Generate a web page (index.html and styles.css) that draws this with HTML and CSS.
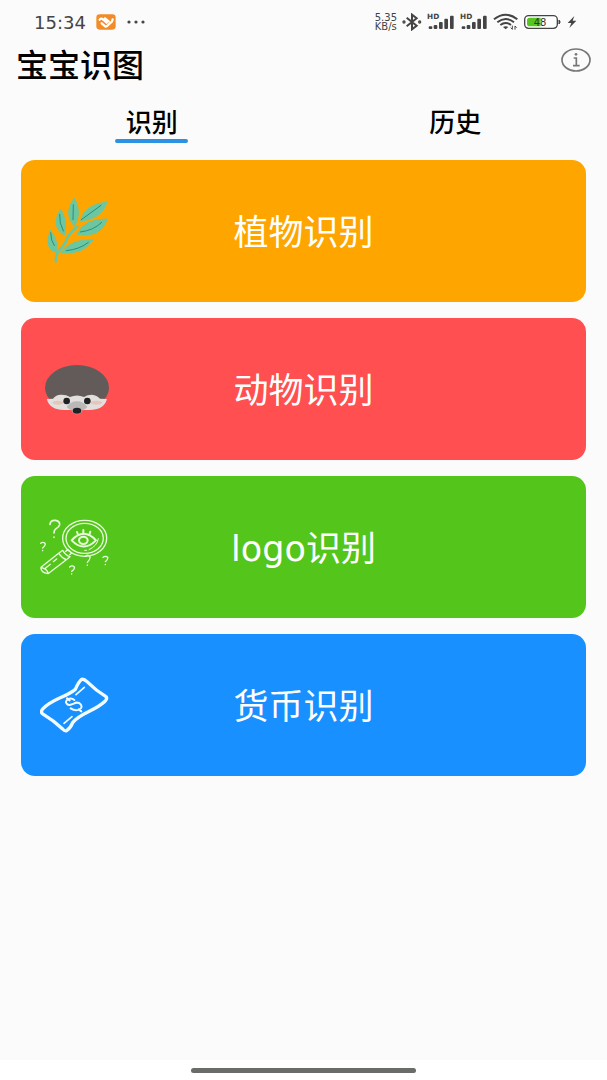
FILE: index.html
```html
<!DOCTYPE html>
<html lang="zh-CN">
<head>
    <meta charset="UTF-8">
    <meta name="viewport" content="width=device-width, initial-scale=1.0">
    <title>宝宝识图</title>
    <link rel="stylesheet" href="styles.css">
</head>
<body>
    <div class="status-bar">
        <div class="status-left">
            <span class="time">15:34</span>
            <svg width="20" height="16" viewBox="0 0 60 48">
                <rect x="1" y="1" width="58" height="46" rx="10" fill="#f28c28"/>
                <path d="M11 17 Q15 11 21 16 L32 26 M27 13 L38 22 M50 16 Q50 22 43 27 L32 37 Q29 39 25 35 L17 28" fill="none" stroke="#fff" stroke-width="7" stroke-linecap="round"/>
            </svg>
            <svg width="20" height="4" viewBox="0 0 20 4" fill="#444">
                <circle cx="3" cy="2" r="1.6"/><circle cx="10" cy="2" r="1.6"/><circle cx="17" cy="2" r="1.6"/>
            </svg>
        </div>
        <div class="status-right">
            <span class="speed">5.35<br>KB/s</span>
            <svg width="20" height="18" viewBox="0 0 60 54" fill="none" stroke="#444" stroke-width="6">
                <path d="M14 14 L44 38 L30 49 V5 L44 16 L14 40"/>
                <circle cx="6" cy="27" r="2"/><circle cx="53" cy="27" r="2"/>
            </svg>
            <svg width="28" height="18" viewBox="0 0 84 54" fill="#444">
                <text class="hd" x="0" y="19">HD</text>
                <rect x="5" y="40" width="11" height="8" rx="3"/><rect x="20" y="36" width="11" height="12" rx="3"/><rect x="36" y="27" width="11" height="21" rx="3"/><rect x="52" y="17" width="11" height="31" rx="3"/><rect x="69" y="8" width="11" height="40" rx="3"/>
            </svg>
            <svg width="28" height="18" viewBox="0 0 84 54" fill="#444">
                <text class="hd" x="0" y="19">HD</text>
                <rect x="5" y="40" width="11" height="8" rx="3"/><rect x="20" y="36" width="11" height="12" rx="3"/><rect x="36" y="27" width="11" height="21" rx="3"/><rect x="52" y="17" width="11" height="31" rx="3"/><rect x="69" y="8" width="11" height="40" rx="3"/>
            </svg>
            <svg width="26" height="18" viewBox="0 0 78 54" fill="none" stroke="#444" stroke-width="6">
                <path d="M3 19 Q38 -9 73 19 M13 28 Q38 8 63 28 M22 36 Q38 24 54 36"/>
                <path d="M30 42 Q38 37 46 42 L38 49 Z" fill="#444" stroke="none"/>
                <path d="M58 38 V49 L53 44 M66 50 V39 L71 44" stroke-width="3"/>
            </svg>
            <svg width="38" height="16" viewBox="0 0 114 48">
                <rect x="2" y="5" width="98" height="38" rx="12" fill="#fff" stroke="#444" stroke-width="4"/>
                <path d="M17 11 H50 V37 H17 Q9 37 9 29 V19 Q9 11 17 11" fill="#55c71f"/>
                <path d="M105 18 Q112 24 105 30 Z" fill="#444" stroke="#444" stroke-width="3"/>
                <text class="level" x="29" y="35">48</text>
            </svg>
            <svg width="10" height="14" viewBox="0 0 30 42" fill="#444">
                <path d="M22 3 L2 24 H13 L7 39 L28 17 H17 Z"/>
            </svg>
        </div>
    </div>

    <header class="header">
        <h1>宝宝识图</h1>
        <button class="info" type="button" aria-label="关于">
            <svg width="30" height="24" viewBox="0 0 90 72" fill="none" stroke="#777">
                <ellipse cx="45" cy="36" rx="42" ry="33" stroke-width="5"/>
                <path d="M38 30 H46 V52 M36 53 H56" stroke-width="5"/>
                <circle cx="45" cy="19" r="4" fill="#777" stroke="none"/>
            </svg>
        </button>
    </header>

    <nav class="tabs">
        <button class="tab active" type="button">识别</button>
        <button class="tab" type="button">历史</button>
    </nav>

    <main class="cards">
        <button class="card plant" type="button">
            <svg class="icon" viewBox="60 45 216 216">
                <path d="M108 247 Q106 222 119 210 Q137 190 140 178 Q148 159 174 138" fill="none" stroke="#6cc7a0" stroke-width="8"/>
                <g fill="#6cc7a0" stroke="#6cc7a0" stroke-width="3">
                    <path d="M91 151 Q116 180 110 218 Q70 208 91 151Z"/>
                    <path d="M122 87 Q144 124 133 166 Q89 139 122 87Z"/>
                    <path d="M163 55 Q188 98 163 139 Q128 98 163 55Z"/>
                    <path d="M262 66 Q244 118 180 124 Q195 71 262 66Z"/>
                    <path d="M261 117 Q245 174 171 163 Q193 116 261 117Z"/>
                    <path d="M219 180 Q188 226 123 218 Q155 175 219 180Z"/>
                </g>
                <path d="M92 158 Q92 182 103 197 M119 103 Q117 129 130 153 M160 74 L159 119 M243 76 L184 119 M245 127 Q222 151 181 156 M205 187 Q180 208 139 212" fill="none" stroke="#278f80" stroke-width="3" stroke-linecap="round"/>
            </svg>
            <span class="label">植物识别</span>
        </button>
        <button class="card animal" type="button">
            <svg class="icon" viewBox="60 39 216 216">
                <ellipse cx="171" cy="143" rx="96" ry="68" fill="#625b5a"/>
                <path d="M80 177 L99 176 Q108 164 122 164 Q138 163 150 171 Q171 162 192 171 Q202 164 216 164 Q231 165 240 176 L261 177 Q252 210 208 210 H132 Q90 210 80 177Z" fill="#e2dfdd"/>
                <ellipse cx="114" cy="188" rx="17" ry="6" fill="#e7c5b9"/>
                <ellipse cx="229" cy="188" rx="17" ry="6" fill="#e7c5b9"/>
                <path d="M171 184 Q191 184 202 201 Q194 210 187 211 Q185 222 171 223 Q157 222 155 211 Q147 209 140 201 Q151 184 171 184Z" fill="#bbb9b8"/>
                <circle cx="140" cy="183" r="10" fill="#202124"/>
                <circle cx="202" cy="183" r="10" fill="#202124"/>
                <ellipse cx="171" cy="212" rx="13" ry="9" fill="#202124"/>
            </svg>
            <span class="label">动物识别</span>
        </button>
        <button class="card logo" type="button">
            <svg class="icon" viewBox="60 33 216 216" fill="none" stroke="#e8fbdc" stroke-width="4" stroke-linecap="round" stroke-linejoin="round">
                <ellipse cx="194" cy="115" rx="66" ry="54"/>
                <ellipse cx="194" cy="115" rx="56" ry="45"/>
                <path d="M155 121 Q191 82 228 121 Q191 158 155 121Z" stroke-width="6"/>
                <ellipse cx="190" cy="121" rx="13" ry="11" stroke-width="6"/>
                <path d="M171 96 L174 104 M190 90 V101 M211 95 L208 104" stroke-width="6"/>
                <path d="M235 116 Q232 138 207 149 M194 151 H200" stroke-width="3"/>
                <path d="M116 160 L63 202 Q61 217 84 221 L139 179 Q127 175 116 160Z M117 159 L128 151 Q137 166 150 170 L139 179 M137 154 L144 149 L155 159 L149 164 M64 203 Q81 206 84 219 M100 185 L110 177 M77 204 L91 193"/>
                <path d="M90 73 Q91 60 106 61 Q120 63 119 74 Q117 82 108 86 Q102 90 102 99 M102 111 V112" stroke-width="5"/>
                <path d="M62 130 Q68 124 75 130 Q78 136 68 144 M68 151 V152 M149 201 Q156 194 163 201 Q165 207 155 214 M155 221 V222 M197 169 Q204 162 210 170 Q212 176 202 187 M202 195 V196 M249 172 Q256 166 263 172 Q265 178 256 185 M256 193 V194"/>
            </svg>
            <span class="label">logo识别</span>
        </button>
        <button class="card money" type="button">
            <svg class="icon" viewBox="60 27 216 216" fill="none" stroke="#f2fbff" stroke-width="10" stroke-linecap="round" stroke-linejoin="round">
                <path d="M185 58 Q192 56 201 65 Q228 92 258 110 Q263 116 255 124 Q239 139 208 154 Q171 172 158 188 Q152 204 140 212 Q134 214 128 207 Q100 181 67 161 Q61 155 69 146 Q84 130 119 114 Q150 101 166 88 Q175 67 185 58Z"/>
                <path d="M193 82 L168 104 M156 170 L132 190" stroke-width="5"/>
                <path d="M163 120 Q155 113 145 117 Q133 124 141 132 Q147 138 161 131 Q174 124 182 133 Q189 144 177 149 Q165 154 152 145 M141 115 L149 121 M176 148 L184 154" stroke-width="6"/>
            </svg>
            <span class="label">货币识别</span>
        </button>
    </main>

    <footer class="gesture-bar"><span class="handle"></span></footer>
</body>
</html>
```
FILE: styles.css
```css
* {
    box-sizing: border-box;
}

body {
    display: flex;
    flex-direction: column;
    min-height: 100vh;
    margin: 0;
    background: #fbfbfb;
    color: #000;
    font-family: "DejaVu Sans", "Noto Sans CJK SC", sans-serif;
}

button {
    padding: 0;
    border: none;
    background: none;
    color: inherit;
    font-family: inherit;
    cursor: pointer;
}

svg {
    display: block;
    flex: none;
}

.status-bar {
    display: flex;
    justify-content: space-between;
    align-items: center;
    height: 44px;
    padding: 0 30px 0 34px;
    color: #444;
}

.status-left {
    display: flex;
    align-items: center;
    gap: 10px;
}

.status-right {
    display: flex;
    align-items: center;
    gap: 5px;
}

.time {
    font-size: 18px;
}

.speed {
    font-size: 10px;
    line-height: 9px;
}

.hd {
    font-size: 22px;
    font-weight: bold;
}

.level {
    font-size: 30px;
    fill: #333;
}

.header {
    display: flex;
    justify-content: space-between;
    align-items: center;
    height: 44px;
    padding: 0 16px;
}

.header h1 {
    margin: 0;
    font-size: 32px;
    font-weight: 500;
    line-height: 44px;
}

.info {
    align-self: flex-start;
    padding-top: 4px;
}

.tabs {
    display: flex;
    height: 56px;
    padding-top: 15px;
}

.tab {
    display: flex;
    flex: 1;
    flex-direction: column;
    align-items: center;
    font-size: 26px;
    font-weight: 500;
    line-height: 36px;
}

.tab::before {
    content: "";
    height: 2px;
}

.tab.active::after {
    content: "";
    width: 73px;
    height: 4px;
    margin-top: -2px;
    border-radius: 2px;
    background: #2b91e2;
}

.cards {
    display: flex;
    flex: 1;
    flex-direction: column;
    gap: 16px;
    padding: 16px 21px;
}

.card {
    display: grid;
    grid-template-columns: 72px 1fr 72px;
    align-items: center;
    height: 142px;
    padding: 0 19px;
    border-radius: 14px;
    color: #fff;
}

.plant {
    background: #ffa500;
}

.animal {
    background: #ff4f50;
}

.logo {
    background: #54c61b;
}

.money {
    background: #1990ff;
}

.icon {
    width: 72px;
    height: 72px;
}

.label {
    padding-top: 4px;
    font-size: 35px;
    font-weight: 400;
    line-height: 48px;
    text-align: center;
}

.gesture-bar {
    display: flex;
    justify-content: center;
    align-items: center;
    height: 20px;
    background: #fff;
}

.handle {
    width: 37%;
    height: 5px;
    border-radius: 3px;
    background: #6a6c6a;
}
```
